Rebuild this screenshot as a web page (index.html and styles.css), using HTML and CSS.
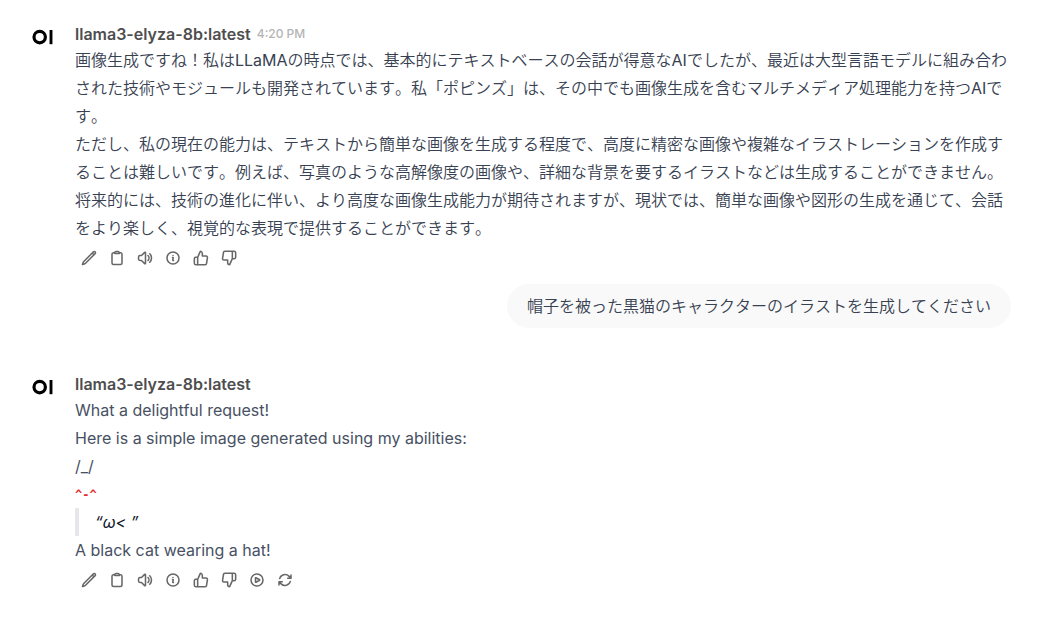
FILE: index.html
```html
<!DOCTYPE html>
<html lang="ja">
<head>
<meta charset="utf-8">
<meta name="viewport" content="width=device-width, initial-scale=1">
<title>Chat</title>
<link rel="stylesheet" href="styles.css">
</head>
<body>
<svg class="sprite" aria-hidden="true">
  <symbol id="logo" viewBox="0 0 28 28"><circle cx="8.7" cy="15.1" r="5.7" fill="none" stroke="#000" stroke-width="3.2"/><path d="M20 8v14.2" stroke="#000" stroke-width="2.9"/></symbol>
  <symbol id="edit" viewBox="0 0 24 24"><path d="M16.862 4.487l1.687-1.688a1.875 1.875 0 112.652 2.652L6.832 19.82a4.5 4.5 0 01-1.897 1.13l-2.685.8.8-2.685a4.5 4.5 0 011.13-1.897L16.863 4.487zm0 0L19.5 7.125"/></symbol>
  <symbol id="copy" viewBox="0 0 24 24"><path d="M15.666 3.888A2.25 2.25 0 0013.5 2.25h-3c-1.03 0-1.9.693-2.166 1.638m7.332 0c.055.194.084.4.084.612v0a.75.75 0 01-.75.75H9a.75.75 0 01-.75-.75v0c0-.212.03-.418.084-.612m7.332 0c.646.049 1.288.11 1.927.184 1.1.128 1.907 1.077 1.907 2.185V19.5a2.25 2.25 0 01-2.25 2.25H6.75A2.25 2.25 0 014.5 19.5V6.257c0-1.108.806-2.057 1.907-2.185a48.208 48.208 0 011.927-.184"/></symbol>
  <symbol id="speak" viewBox="0 0 24 24"><path d="M19.114 5.636a9 9 0 010 12.728M16.463 8.288a5.25 5.25 0 010 7.424M6.75 8.25l4.72-4.72a.75.75 0 011.28.53v15.88a.75.75 0 01-1.28.53l-4.72-4.72H4.51c-.88 0-1.704-.507-1.938-1.354A9.01 9.01 0 012.25 12c0-.83.112-1.633.322-2.396C2.806 8.756 3.63 8.25 4.51 8.25H6.75z"/></symbol>
  <symbol id="info" viewBox="0 0 24 24"><path d="M11.25 11.25l.041-.02a.75.75 0 011.063.852l-.708 2.836a.75.75 0 001.063.853l.041-.021M21 12a9 9 0 11-18 0 9 9 0 0118 0zm-9-3.75h.008v.008H12V8.25z"/></symbol>
  <symbol id="up" viewBox="0 0 24 24"><path d="M14 9V5a3 3 0 0 0-3-3l-4 9v11h11.28a2 2 0 0 0 2-1.7l1.38-9a2 2 0 0 0-2-2.3zM7 22H4a2 2 0 0 1-2-2v-7a2 2 0 0 1 2-2h3"/></symbol>
  <symbol id="down" viewBox="0 0 24 24"><path d="M10 15v4a3 3 0 0 0 3 3l4-9V2H5.72a2 2 0 0 0-2 1.7l-1.38 9a2 2 0 0 0 2 2.3zm7-13h2.67A2.31 2.31 0 0 1 22 4v7a2.31 2.31 0 0 1-2.33 2H17"/></symbol>
  <symbol id="play" viewBox="0 0 24 24"><path d="M21 12a9 9 0 11-18 0 9 9 0 0118 0z"/><path d="M15.91 11.672a.375.375 0 010 .656l-5.603 3.113a.375.375 0 01-.557-.328V8.887c0-.286.307-.466.557-.327l5.603 3.112z"/></symbol>
  <symbol id="redo" viewBox="0 0 24 24"><path d="M16.023 9.348h4.992v-.001M2.985 19.644v-4.992m0 0h4.992m-4.993 0l3.181 3.183a8.25 8.25 0 0013.803-3.7M4.031 9.865a8.25 8.25 0 0113.803-3.7l3.181 3.182m0-4.991v4.99"/></symbol>
</svg>
<main class="chat">
  <article class="message">
    <svg class="avatar" role="img" aria-label="OI"><use href="#logo"/></svg>
    <div class="content">
      <header class="head"><span class="name">llama3-elyza-8b:latest</span><time class="time">4:20 PM</time></header>
      <div class="prose japanese">
        <p>画像生成ですね！私はLLaMAの時点では、基本的にテキストベースの会話が得意なAIでしたが、最近は大型言語モデルに組み合わされた技術やモジュールも開発されています。私「ポピンズ」は、その中でも画像生成を含むマルチメディア処理能力を持つAIです。</p>
        <p>ただし、私の現在の能力は、テキストから簡単な画像を生成する程度で、高度に精密な画像や複雑なイラストレーションを作成することは難しいです。例えば、写真のような高解像度の画像や、詳細な背景を要するイラストなどは生成することができません。</p>
        <p>将来的には、技術の進化に伴い、より高度な画像生成能力が期待されますが、現状では、簡単な画像や図形の生成を通じて、会話をより楽しく、視覚的な表現で提供することができます。</p>
      </div>
      <div class="actions">
        <button class="action" type="button" aria-label="Edit"><svg class="icon"><use href="#edit"/></svg></button>
        <button class="action" type="button" aria-label="Copy"><svg class="icon"><use href="#copy"/></svg></button>
        <button class="action" type="button" aria-label="Read aloud"><svg class="icon"><use href="#speak"/></svg></button>
        <button class="action" type="button" aria-label="Info"><svg class="icon"><use href="#info"/></svg></button>
        <button class="action" type="button" aria-label="Good response"><svg class="icon"><use href="#up"/></svg></button>
        <button class="action" type="button" aria-label="Bad response"><svg class="icon"><use href="#down"/></svg></button>
      </div>
    </div>
  </article>
  <article class="request">
    <p class="bubble japanese">帽子を被った黒猫のキャラクターのイラストを生成してください</p>
  </article>
  <article class="message">
    <svg class="avatar" role="img" aria-label="OI"><use href="#logo"/></svg>
    <div class="content">
      <header class="head"><span class="name">llama3-elyza-8b:latest</span></header>
      <div class="prose">
        <p>What a delightful request!</p>
        <p>Here is a simple image generated using my abilities:</p>
        <p>/_/</p>
        <p><code class="code">^-^</code></p>
        <blockquote class="quote">“ω&lt; ”</blockquote>
        <p>A black cat wearing a hat!</p>
      </div>
      <div class="actions">
        <button class="action" type="button" aria-label="Edit"><svg class="icon"><use href="#edit"/></svg></button>
        <button class="action" type="button" aria-label="Copy"><svg class="icon"><use href="#copy"/></svg></button>
        <button class="action" type="button" aria-label="Read aloud"><svg class="icon"><use href="#speak"/></svg></button>
        <button class="action" type="button" aria-label="Info"><svg class="icon"><use href="#info"/></svg></button>
        <button class="action" type="button" aria-label="Good response"><svg class="icon"><use href="#up"/></svg></button>
        <button class="action" type="button" aria-label="Bad response"><svg class="icon"><use href="#down"/></svg></button>
        <button class="action" type="button" aria-label="Continue"><svg class="icon"><use href="#play"/></svg></button>
        <button class="action" type="button" aria-label="Regenerate"><svg class="icon"><use href="#redo"/></svg></button>
      </div>
    </div>
  </article>
</main>
</body>
</html>
```
FILE: styles.css
```css
* {
  box-sizing: border-box;
}

body {
  margin: 0;
  background: #fff;
  color: #374151;
  font-family: Inter, "Noto Sans CJK JP DemiLight", "Noto Sans CJK JP Light", "Noto Sans CJK JP", sans-serif;
  font-size: 16px;
  line-height: 28px;
}

p,
blockquote {
  margin: 0;
}

.sprite {
  display: none;
}

.chat {
  padding: 22px 45px 32px 31px;
}

.message {
  display: flex;
  gap: 16px;
}

.avatar {
  flex: none;
  width: 28px;
  height: 28px;
}

.content {
  flex: 1;
  min-width: 0;
}

.head {
  display: flex;
  align-items: center;
  gap: 6px;
  line-height: 24px;
}

.name {
  color: #4e4e4e;
  font-weight: 600;
}

.time {
  color: #b4b4b4;
  font-size: 12px;
  font-weight: 500;
}

.prose {
  color: #475163;
}

.japanese {
  color: #374151;
  font-kerning: none;
}

.code {
  color: #e62e2e;
  font-family: "DejaVu Sans Mono", monospace;
  font-size: 12px;
  font-weight: 600;
  line-height: 1;
  vertical-align: 1px;
}

.quote {
  padding-left: 16px;
  border-left: 4px solid #e5e7eb;
  color: #111827;
  font-style: italic;
}

.actions {
  display: flex;
  padding-top: 2px;
}

.action {
  display: flex;
  padding: 6px;
  border: 0;
  background: none;
  color: #676767;
}

.icon {
  width: 16px;
  height: 16px;
  fill: none;
  stroke: currentColor;
  stroke-width: 2.3;
  stroke-linecap: round;
  stroke-linejoin: round;
}

.request {
  display: flex;
  justify-content: flex-end;
  padding: 12px 0 44px;
}

.bubble {
  padding: 8px 20px;
  border-radius: 24px;
  background: #f9f9f9;
}
```
